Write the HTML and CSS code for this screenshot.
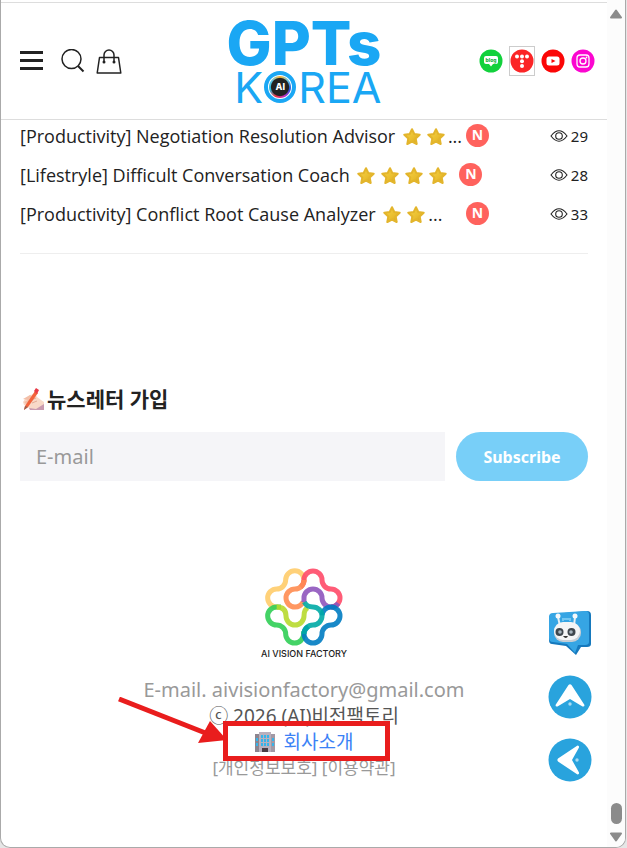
FILE: index.html
```
<!DOCTYPE html>
<html lang="ko">

<head>
    <meta charset="UTF-8">
    <meta name="viewport" content="width=device-width, initial-scale=1.0">
    <title>GPTs KOREA</title>
    <link rel="stylesheet" href="styles.css">
</head>

<body>
    <!-- shared icons -->
    <svg class="sprite" aria-hidden="true">
        <defs>
            <linearGradient id="gold" x1="0" y1="0" x2="1" y2="1">
                <stop offset="0" stop-color="#f8d548" />
                <stop offset="0.6" stop-color="#e9bd2e" />
                <stop offset="1" stop-color="#c99a1c" />
            </linearGradient>
        </defs>
        <symbol id="star" viewBox="0 0 18 18">
            <path d="M9 1.2 11.3 6l5.4.7-4 3.8 1 5.5L9 13.5 4.3 16l1-5.5-4-3.8L6.7 6z" fill="url(#gold)" stroke="#e3b52c" stroke-width="2" stroke-linejoin="round" />
        </symbol>
        <symbol id="eye" viewBox="0 0 18 12">
            <path d="M1 6Q9-4.500 17 6Q9 16.500 1 6z" fill="none" stroke="#222" stroke-width="1.100" />
            <circle cx="9" cy="6" r="3.300" fill="none" stroke="#222" stroke-width="1.100" />
        </symbol>
    </svg>

    <div class="window">
        <div class="page">
            <header class="header">
                <nav class="tools">
                    <button type="button" class="icon-button" aria-label="메뉴">
                        <svg width="23" height="22" viewBox="0 0 23 22"><path d="M0 2.500h23M0 10.500h23M0 18.500h23" stroke="#222" stroke-width="3" /></svg>
                    </button>
                    <button type="button" class="icon-button" aria-label="검색">
                        <svg width="24" height="24" viewBox="0 0 24 24"><g fill="none" stroke="#222" stroke-width="1.500"><circle cx="10.500" cy="10" r="9.500" /><path d="m17 17 5.500 5.500" stroke-width="2" /></g></svg>
                    </button>
                    <button type="button" class="icon-button" aria-label="장바구니">
                        <svg width="26" height="26" viewBox="0 0 26 26"><path d="M3.500 9.500h19l2.300 15.500H1.200z" fill="none" stroke="#222" stroke-width="1.500" stroke-linejoin="round" /><path d="M8 14V7a5 5 0 0 1 10 0v7" fill="none" stroke="#222" stroke-width="1.500" /><circle cx="8" cy="14" r="1.500" fill="#222" /><circle cx="18" cy="14" r="1.500" fill="#222" /></svg>
                    </button>
                </nav>

                <a href="#" class="logo">
                    <span class="logo-top">GPTs</span>
                    <span class="logo-bottom">K<span class="emblem"><span class="emblem-core">AI</span></span>REA</span>
                </a>

                <nav class="social">
                    <a href="#" class="social-link" aria-label="blog">
                        <svg width="24" height="24" viewBox="0 0 24 24"><circle cx="12" cy="12" r="11.500" fill="#12d13c" /><path d="M7 7h10q2 0 2 2v4q0 2-2 2h-3l-2 2.500L10 15H7q-2 0-2-2V9q0-2 2-2z" fill="#fff" /><text x="12" y="13" text-anchor="middle" class="blog-text">blog</text></svg>
                    </a>
                    <a href="#" class="social-link framed" aria-label="tistory">
                        <svg width="24" height="24" viewBox="0 0 24 24"><circle cx="12" cy="12" r="11.500" fill="#fb2526" /><g fill="#fff"><circle cx="7" cy="7.500" r="2" /><circle cx="12" cy="7.500" r="2" /><circle cx="17" cy="7.500" r="2" /><circle cx="12" cy="12.200" r="2" /><circle cx="12" cy="17" r="2" /></g></svg>
                    </a>
                    <a href="#" class="social-link" aria-label="YouTube">
                        <svg width="24" height="24" viewBox="0 0 24 24"><circle cx="12" cy="12" r="11.500" fill="#fb0606" /><rect x="5.500" y="7.500" width="13" height="9" rx="2.500" fill="#fff" /><path d="m10.500 10 4 2-4 2z" fill="#fb0606" /></svg>
                    </a>
                    <a href="#" class="social-link" aria-label="Instagram">
                        <svg width="24" height="24" viewBox="0 0 24 24"><circle cx="12" cy="12" r="11.500" fill="#fb06d0" /><g fill="none" stroke="#fff" stroke-width="1.300"><rect x="6" y="6" width="12" height="12" rx="3" /><circle cx="12" cy="12" r="3" /></g><circle cx="15.500" cy="8.500" r="0.900" fill="#fff" /></svg>
                    </a>
                </nav>
            </header>

            <main class="content">
                <ul class="posts">
                    <li class="post">
                        <a href="#" class="post-title clipped">[Productivity] Negotiation Resolution Advisor <svg class="star"><use href="#star" /></svg><svg class="star"><use href="#star" /></svg>...</a>
                        <span class="badge">N</span>
                        <span class="views"><svg class="eye"><use href="#eye" /></svg>29</span>
                    </li>
                    <li class="post">
                        <a href="#" class="post-title">[Lifestryle] Difficult Conversation Coach <svg class="star"><use href="#star" /></svg><svg class="star"><use href="#star" /></svg><svg class="star"><use href="#star" /></svg><svg class="star"><use href="#star" /></svg></a>
                        <span class="badge">N</span>
                        <span class="views"><svg class="eye"><use href="#eye" /></svg>28</span>
                    </li>
                    <li class="post">
                        <a href="#" class="post-title clipped">[Productivity] Conflict Root Cause Analyzer <svg class="star"><use href="#star" /></svg><svg class="star"><use href="#star" /></svg>...</a>
                        <span class="badge">N</span>
                        <span class="views"><svg class="eye"><use href="#eye" /></svg>33</span>
                    </li>
                </ul>

                <section class="newsletter">
                    <h2 class="heading">
                        <svg width="22" height="22" viewBox="0 0 22 22"><path d="M3 11 8 7l5-1 2 3 4 3 3 2v7H8l-3-3-3-1-1-3z" fill="#f8d9c8" /><path d="m1 11 7-4 3 2-5 3zM2 14l6-3 2 2-6 3z" fill="#f3bfa8" /><path d="m14 21 8-5v6H8l-1-2z" fill="#c99bb0" /><path d="m9 12 5-2M10 15l5-2" stroke="#dfa690" stroke-width="0.900" /><path d="M3 18 13 3l3 2L6 19l-4 3z" fill="#f2643c" /><path d="m12 3 2-3 3 2-2 4z" fill="#e83b46" /><path d="m3 18 3 1-4 3z" fill="#98604f" /></svg>
                        <label for="email">뉴스레터 가입</label>
                    </h2>
                    <form class="form">
                        <input type="email" id="email" class="email" placeholder="E-mail">
                        <button type="button" class="subscribe">Subscribe</button>
                    </form>
                </section>
            </main>

            <footer class="footer">
                <svg class="flower" width="78" height="78" viewBox="42 38 234 234" role="img" aria-label="AI VISION FACTORY">
                    <g fill="none" stroke-width="15" stroke-opacity="0.900">
                        <path d="M82 155H77a27 27 0 0 1 0-54a27 27 0 0 0 27-27a27 27 0 0 1 55 0v6" stroke="#ffcc6a" />
                        <path d="M240 101a27 27 0 0 1-27-27a27 27 0 0 0-54 0a27 27 0 0 1-10 21" stroke="#ff4a68" />
                        <path d="M159 74a27 27 0 0 1-27 27a27 27 0 0 0 0 54q16 0 25-16" stroke="#ff8c50" />
                        <path d="M240 101a27 27 0 0 1 0 54" stroke="#ff4a68" />
                        <path d="M159 140v-12a27 27 0 0 1 54 0a27 27 0 0 0 27 27q14 0 22-11" stroke="#8f55bd" />
                        <path d="M90 155H77a27 27 0 0 0 0 54a27 27 0 0 1 27 27a27 27 0 0 0 54 0v-8" stroke="#30ce55" />
                        <path d="M77 155q28 0 28 27a27 27 0 0 0 54 0q0-20 12-25" stroke="#b7d92d" />
                        <path d="M172 214q-13 8-13 22a27 27 0 0 0 54 0a27 27 0 0 1 27-27a27 27 0 0 0 0-54a27 27 0 0 0-27 25" stroke="#007cc2" />
                        <path d="M160 140q7 15 26 15a27 27 0 0 1 0 54a27 27 0 0 0-27 27" stroke="#00aaa5" />
                    </g>
                </svg>
                <strong class="factory">AI VISION FACTORY</strong>
                <address class="info">
                    <span>E-mail. aivisionfactory@gmail.com</span>
                    <span class="copyright">ⓒ 2026 (AI)비전팩토리</span>
                    <span class="company">
                        <svg width="20" height="20" viewBox="0 0 20 20"><path d="M0 2h5v18H0z" fill="#8d858f" /><path d="M15 2h5v18h-5z" fill="#a299a5" /><path d="M4 0h12v20H4z" fill="#b9b0bd" /><path d="M6 3h2v3H6zM9 3h2v3H9zM12 3h2v3h-2zM6 7h2v3H6zM9 7h2v3H9zM12 7h2v3h-2zM6 11h2v3H6zM9 11h2v3H9zM12 11h2v3h-2zM1 6h2v3H1zM1 11h2v3H1zM17 6h2v3h-2zM17 11h2v3h-2z" fill="#35b4ea" /><path d="M7 16h6v4H7z" fill="#493e45" /></svg>
                        <a href="#" class="company-link">회사소개</a>
                        <span class="marker">
                            <svg class="arrow" width="110" height="50" viewBox="0 0 110 50"><path d="M1 2 90 37" stroke="#e91d1d" stroke-width="5" /><path d="M92 24 109 43 80 46z" fill="#e91d1d" /></svg>
                        </span>
                    </span>
                    <span class="policy"><a href="#">[개인정보보호]</a> <a href="#">[이용약관]</a></span>
                </address>
            </footer>

            <aside class="floating">
                <button type="button" class="float-button" aria-label="챗봇">
                    <svg width="44" height="46" viewBox="0 0 44 46"><path d="M5 4 39 1q4 0 4 4v29q0 3-4 3h-6l-5 8-10-9-14-2q-3 0-3-4V8q0-3 4-4z" fill="#1679bd" /><path d="M5 3 38 1q3 0 3 4v27q0 3-4 3h-7l-3 8-8-9-14-2q-4 0-4-4V7q0-4 4-4z" fill="#36a5e4" /><path d="M12 16 10 7M26 16l1-9" stroke="#e6eef4" stroke-width="2" /><circle cx="10" cy="6" r="2.500" fill="#f5f8fa" /><circle cx="27" cy="6" r="2.500" fill="#f5f8fa" /><rect x="6" y="13" width="27" height="19" rx="9" fill="#c6ced6" /><rect x="6" y="12" width="26" height="18" rx="9" fill="#f4f5f6" /><circle cx="11.500" cy="22" r="4" fill="#3e464d" /><circle cx="23.500" cy="22" r="4" fill="#3e464d" /><circle cx="12" cy="22" r="1.800" fill="#a7b5bf" /><circle cx="23" cy="22" r="1.800" fill="#a7b5bf" /><path d="M15 26q3 4 5 0z" fill="#333" /><path d="M15 11V9h7v2" fill="none" stroke="#72c6f1" stroke-width="2" /></svg>
                </button>
                <button type="button" class="float-button" aria-label="위로">
                    <svg width="44" height="44" viewBox="0 0 44 44"><circle cx="22" cy="22" r="21.500" fill="#29a3dd" /><path d="M20.500 10q1.500-1.500 3 0l13 20q0 2-2 1.500L22 24 9.500 31.500q-2 .5-2-1.500z" fill="#fff" /><circle cx="22" cy="29" r="1.700" fill="#a9dbf2" /></svg>
                </button>
                <button type="button" class="float-button" aria-label="뒤로">
                    <svg width="44" height="44" viewBox="0 0 44 44"><circle cx="22" cy="22" r="21.500" fill="#29a3dd" /><path d="M10 20.500q-1.500 1.500 0 3l19.500 13q2 0 1.500-2L24 22l7-12.500q.5-2-1.500-2z" fill="#fff" /><circle cx="29" cy="22" r="1.700" fill="#a9dbf2" /></svg>
                </button>
            </aside>
        </div>

        <div class="scrollbar" aria-hidden="true">
            <svg width="12" height="10" viewBox="0 0 12 10"><path d="M6 1.500 11 8.500H1z" fill="#8b8b8b" stroke="#8b8b8b" stroke-width="2" stroke-linejoin="round" /></svg>
            <span class="thumb"></span>
            <svg width="12" height="10" viewBox="0 0 12 10"><path d="M6 8.500 1 1.500h10z" fill="#8b8b8b" stroke="#8b8b8b" stroke-width="2" stroke-linejoin="round" /></svg>
        </div>
    </div>
</body>

</html>
```

FILE: styles.css
```
* {
    box-sizing: border-box;
}

body {
    margin: 0;
    padding-right: 1px;
    background-color: #e6e6e6;
    color: #222;
    font-family: "Noto Sans", "Noto Sans CJK KR", sans-serif;
    font-size: 18px;
}

a {
    color: inherit;
    text-decoration: none;
}

button {
    padding: 0;
    border: 0;
    background: none;
    font-family: inherit;
    cursor: pointer;
}

svg {
    display: block;
    flex-shrink: 0;
}

.sprite {
    position: absolute;
    width: 0;
    height: 0;
}

.window {
    display: flex;
    min-height: 100vh;
    border: 1px solid #aaa;
    border-top: 0;
    border-radius: 0 0 10px 10px;
    background-color: #fff;
    overflow: hidden;
}

.page {
    flex: 1;
    min-width: 0;
    padding-top: 2px;
}

/* Header */
.header {
    display: grid;
    grid-template-columns: 1fr auto 1fr;
    align-items: center;
    height: 118px;
    padding: 0 12px;
    border-top: 1px solid #ddd;
    border-bottom: 1px solid #ddd;
}

.tools {
    display: flex;
    align-items: center;
    gap: 18px;
    padding-left: 7px;
}

.icon-button + .icon-button + .icon-button {
    margin-left: -7px;
}

.logo {
    display: flex;
    flex-direction: column;
    align-items: flex-end;
    padding-top: 4px;
    color: #1aa7f4;
    font-family: Inter, sans-serif;
}

.logo-top {
    font-size: 60px;
    font-weight: 800;
    line-height: 48px;
}

.logo-bottom {
    display: flex;
    align-items: center;
    font-size: 43px;
    line-height: 40px;
}

.emblem {
    display: flex;
    width: 32px;
    height: 32px;
    margin: 0 2px 0 1px;
    padding: 1px;
    border: 4px solid #1aa7f4;
    border-radius: 50%;
}

.emblem-core {
    flex: 1;
    border-radius: 50%;
    background: radial-gradient(circle, #222 0 55%, transparent 62%), conic-gradient(#ffb52e, #62c7e8, #2454dd, #c12fc0, #ee3340, #22bce0, #62c7e8, #ffb52e);
    color: #fff;
    font-size: 9px;
    font-weight: 800;
    line-height: 22px;
    text-align: center;
}

.social {
    display: flex;
    justify-content: flex-end;
    align-items: center;
    gap: 6px;
}

.framed {
    padding: 2px 0;
    border: 1px solid #ccc;
}

.blog-text {
    fill: #12b03c;
    font-family: Inter, sans-serif;
    font-size: 5px;
    font-weight: 800;
}

/* Posts */
.content {
    padding: 0 19px;
}

.posts {
    margin: 0;
    padding: 0 0 20px;
    border-bottom: 1px solid #eee;
    list-style: none;
}

.post {
    display: flex;
    align-items: center;
    height: 39px;
}

.post:first-child {
    margin-top: -4px;
}

.post-title {
    font-family: "Open Sans", "Noto Sans", sans-serif;
    white-space: nowrap;
}

.clipped {
    width: 437px;
}

.star {
    display: inline-block;
    width: 18px;
    height: 18px;
    margin: 0 3px;
    vertical-align: -3px;
}

.badge {
    width: 23px;
    height: 23px;
    margin-left: 9px;
    border-radius: 50%;
    background-color: #ff625d;
    color: #fff;
    font-size: 14px;
    font-weight: 700;
    line-height: 22px;
    text-align: center;
}

.views {
    display: flex;
    align-items: center;
    gap: 3px;
    margin-left: auto;
    font-size: 15px;
}

.eye {
    width: 18px;
    height: 12px;
}

/* Newsletter */
.newsletter {
    padding-top: 130px;
}

.heading {
    display: flex;
    align-items: center;
    gap: 3px;
    margin: 0 0 18px;
    padding-left: 2px;
    font-size: 21px;
    font-weight: 700;
    line-height: 30px;
}

.form {
    display: flex;
    gap: 11px;
}

.email {
    flex: 1;
    min-width: 0;
    height: 49px;
    padding: 0 16px;
    border: 0;
    background-color: #f5f5f8;
    font-family: inherit;
    font-size: 20px;
}

.email::placeholder {
    color: #999;
}

.subscribe {
    width: 132px;
    height: 49px;
    border-radius: 25px;
    background-color: #78cff8;
    color: #fff;
    font-size: 16px;
    font-weight: 700;
}

/* Footer */
.footer {
    display: flex;
    flex-direction: column;
    align-items: center;
    padding: 87px 19px 60px;
}

.factory {
    color: #222;
    font-family: Inter, sans-serif;
    font-size: 9px;
    font-weight: 500;
    line-height: 15px;
}

.info {
    display: flex;
    flex-direction: column;
    align-items: center;
    margin-top: 16px;
    color: #999;
    font-size: 20px;
    font-style: normal;
    line-height: 26px;
}

.copyright {
    color: #555;
    font-size: 19px;
}

.company {
    position: relative;
    display: flex;
    align-items: center;
    gap: 9px;
    font-size: 19px;
}

.company-link {
    color: #3b82f6;
}

.marker {
    position: absolute;
    inset: -8px -37px -6px -32px;
    border: 5px solid #e91d1d;
    pointer-events: none;
}

.arrow {
    position: absolute;
    right: 100%;
    bottom: 9px;
}

.policy {
    font-size: 17px;
}

/* Floating buttons */
.floating {
    position: fixed;
    right: 35px;
    bottom: 66px;
    display: flex;
    flex-direction: column;
    gap: 19px;
}

/* Scrollbar */
.scrollbar {
    display: flex;
    flex-direction: column;
    align-items: center;
    width: 18px;
    padding: 9px 0 5px;
    background-color: #fcfcfc;
}

.thumb {
    width: 11px;
    height: 21px;
    margin: auto 0 8px;
    border-radius: 6px;
    background-color: #8b8b8b;
}
```
